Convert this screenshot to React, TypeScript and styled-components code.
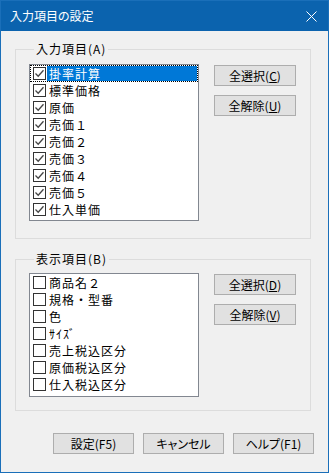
import styled, { createGlobalStyle } from "styled-components";

const GlobalStyle = createGlobalStyle`
    html, body {
        margin: 0;
        padding: 0;
        background: #f0f0f0;
    }
    * {
        box-sizing: border-box;
    }
`;

const FONT = `"Noto Sans CJK JP", "Noto Sans", sans-serif`;

const Window = styled.div`
    width: 329px;
    height: 473px;
    border: 1px solid #1a6fb9;
    background: #f0f0f0;
    display: flex;
    flex-direction: column;
    font-family: ${FONT};
    font-size: 12px;
    color: #000;
`;

const TitleBar = styled.div`
    height: 30px;
    flex-shrink: 0;
    background: #0b63ae;
    color: #fff;
    display: flex;
    align-items: center;
    justify-content: space-between;
    padding: 0 11px 0 9px;
`;

const Title = styled.span`
    font-size: 12px;
    line-height: 16px;
    font-feature-settings: "palt";
`;

const Body = styled.div`
    display: flex;
    flex-direction: column;
    padding: 18px 17px 0 14px;
`;

const Group = styled.div<{ $gap: number; $bottom: number; $top?: number }>`
    border: 1px solid #dcdcdc;
    padding: 0 14px ${(p) => p.$bottom}px 13px;
    margin-top: ${(p) => p.$top ?? 0}px;
    display: flex;
    flex-direction: column;
    gap: ${(p) => p.$gap}px;
`;

const Legend = styled.div`
    margin: -8px 0 0 5px;
    padding: 0 2px;
    width: fit-content;
    background: #f0f0f0;
    line-height: 14px;
    height: 14px;
    font-size: 12px;
    letter-spacing: 1px;
`;

const GroupRow = styled.div`
    display: flex;
    gap: 15px;
    align-items: flex-start;
`;

const ListBox = styled.div<{ $h: number }>`
    width: 170px;
    height: ${(p) => p.$h}px;
    border: 1px solid #828790;
    background: #fff;
    display: flex;
    flex-direction: column;
`;

const Item = styled.div<{ $focus?: boolean }>`
    height: 17px;
    display: flex;
    align-items: center;
    padding: 0 1px;
    outline: ${(p) => (p.$focus ? "1px dotted #000" : "none")};
    outline-offset: -1px;
`;

const Box = styled.span`
    width: 13px;
    height: 13px;
    margin-left: 2px;
    margin-right: 1px;
    border: 1px solid #333;
    background: #fff;
    flex-shrink: 0;
    display: flex;
    align-items: center;
    justify-content: center;
`;

const ItemText = styled.span<{ $selected?: boolean }>`
    flex: 1;
    height: 15px;
    padding-left: 2px;
    font-size: 12px;
    letter-spacing: 1px;
    line-height: 15px;
    white-space: nowrap;
    background: ${(p) => (p.$selected ? "#0078d7" : "transparent")};
    color: ${(p) => (p.$selected ? "#fff" : "#000")};
`;

const ButtonCol = styled.div`
    display: flex;
    flex-direction: column;
    gap: 9px;
    margin-top: 1px;
`;

const Button = styled.button<{ $w?: number }>`
    width: ${(p) => p.$w ?? 82}px;
    height: 21px;
    padding: 0;
    border: 1px solid #adadad;
    background: #e1e1e1;
    font-family: ${FONT};
    font-size: 12px;
    font-feature-settings: "palt";
    line-height: 19px;
    color: #000;
    display: flex;
    align-items: center;
    justify-content: center;
`;

const U = styled.span`
    text-decoration: underline;
`;

const Footer = styled.div`
    display: flex;
    justify-content: flex-end;
    gap: 9px;
    padding: 22px 14px 0 0;
`;

const Check = () => (
    <svg width="11" height="11" viewBox="0 0 11 11">
        <path d="M1.5 5.5 L4.2 8.2 L9.5 2.2" fill="none" stroke="#444" strokeWidth="1.3" />
    </svg>
);

const CloseIcon = () => (
    <svg width="11" height="11" viewBox="0 0 11 11">
        <path d="M0.5 0.5 L10.5 10.5 M10.5 0.5 L0.5 10.5" stroke="#fff" strokeWidth="1" />
    </svg>
);

const inputItems = ["掛率計算", "標準価格", "原価", "売価１", "売価２", "売価３", "売価４", "売価５", "仕入単価"];
const viewItems = ["商品名２", "規格・型番", "色", "ｻｲｽﾞ", "売上税込区分", "原価税込区分", "仕入税込区分"];

const App = () => {
    return (
        <>
            <GlobalStyle />
            <Window>
                <TitleBar>
                    <Title>入力項目の設定</Title>
                    <CloseIcon />
                </TitleBar>
                <Body>
                    <Group $gap={8} $bottom={17}>
                        <Legend>入力項目(A)</Legend>
                        <GroupRow>
                            <ListBox $h={157}>
                                {inputItems.map((label, i) => (
                                    <Item key={label} $focus={i === 0}>
                                        <Box>
                                            <Check />
                                        </Box>
                                        <ItemText $selected={i === 0}>{label}</ItemText>
                                    </Item>
                                ))}
                            </ListBox>
                            <ButtonCol>
                                <Button>
                                    全選択(<U>C</U>)
                                </Button>
                                <Button>
                                    全解除(<U>U</U>)
                                </Button>
                            </ButtonCol>
                        </GroupRow>
                    </Group>
                    <Group $gap={7} $bottom={13} $top={20}>
                        <Legend>表示項目(B)</Legend>
                        <GroupRow>
                            <ListBox $h={124}>
                                {viewItems.map((label) => (
                                    <Item key={label}>
                                        <Box />
                                        <ItemText>{label}</ItemText>
                                    </Item>
                                ))}
                            </ListBox>
                            <ButtonCol>
                                <Button>
                                    全選択(<U>D</U>)
                                </Button>
                                <Button>
                                    全解除(<U>V</U>)
                                </Button>
                            </ButtonCol>
                        </GroupRow>
                    </Group>
                </Body>
                <Footer>
                    <Button $w={81}>設定(F5)</Button>
                    <Button $w={81}>キャンセル</Button>
                    <Button $w={81}>ヘルプ(F1)</Button>
                </Footer>
            </Window>
        </>
    );
};

export default App;
